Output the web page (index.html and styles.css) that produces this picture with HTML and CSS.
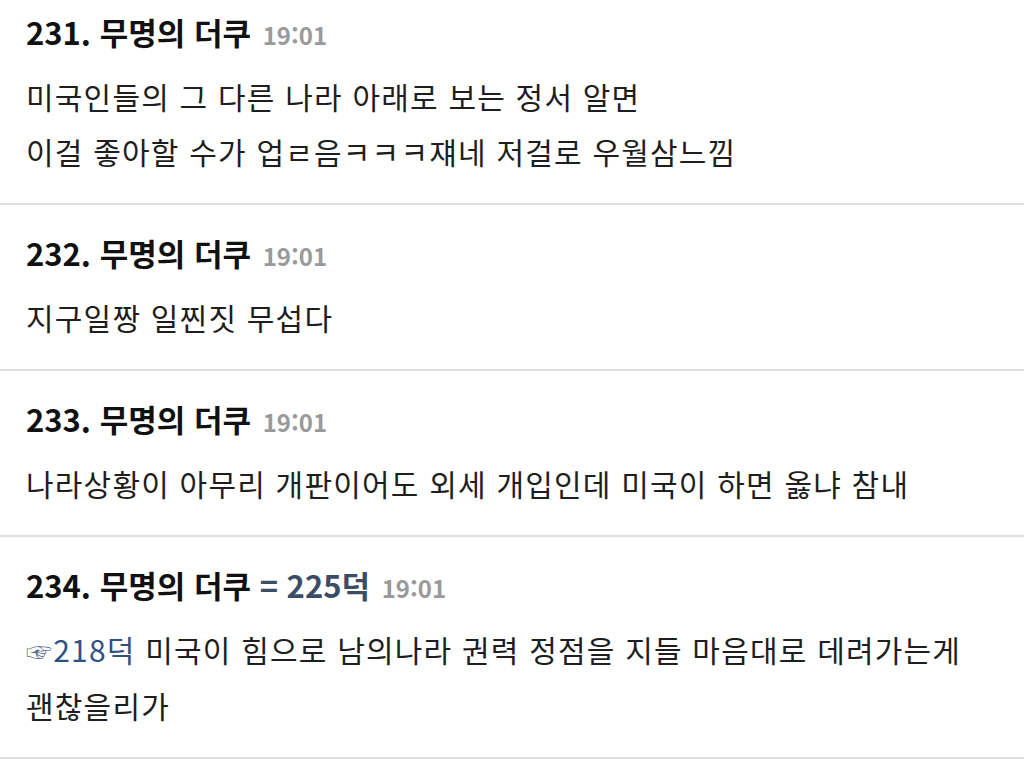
FILE: index.html
```html
<!DOCTYPE html>
<html lang="ko">
<head>
<meta charset="utf-8">
<link rel="stylesheet" href="styles.css">
</head>
<body>
<div class="list">
  <div class="post post-first">
    <div class="head"><span class="num">231.</span> <span class="name">무명의 더쿠</span> <span class="time">19:01</span></div>
    <div class="body">미국인들의 그 다른 나라 아래로 보는 정서 알면<br>이걸 좋아할 수가 업ㄹ음ㅋㅋㅋ쟤네 저걸로 우월삼느낌</div>
  </div>
  <div class="post">
    <div class="head"><span class="num">232.</span> <span class="name">무명의 더쿠</span> <span class="time">19:01</span></div>
    <div class="body">지구일짱 일찐짓 무섭다</div>
  </div>
  <div class="post">
    <div class="head"><span class="num">233.</span> <span class="name">무명의 더쿠</span> <span class="time">19:01</span></div>
    <div class="body">나라상황이 아무리 개판이어도 외세 개입인데 미국이 하면 옳냐 참내</div>
  </div>
  <div class="post">
    <div class="head"><span class="num">234.</span> <span class="name">무명의 더쿠</span> <span class="same">= 225덕</span> <span class="time">19:01</span></div>
    <div class="body"><span class="ref"><span class="hand">☞</span>218덕</span> 미국이 힘으로 남의나라 권력 정점을 지들 마음대로 데려가는게<br>괜찮을리가</div>
  </div>
</div>
</body>
</html>
```
FILE: styles.css
```css
html, body {
  margin: 0;
  padding: 0;
  background: #fff;
}
body {
  font-family: "Noto Sans CJK KR", "Noto Sans", sans-serif;
  color: #222;
  overflow: hidden;
}
.list {
  display: flex;
  flex-direction: column;
}
.post {
  padding: 28px 26px 24px;
  border-bottom: 2px solid #e0e0e0;
}
.post-first {
  padding-top: 12px;
}
.head {
  height: 40px;
  line-height: 40px;
  font-size: 31px;
  font-weight: 700;
  color: #111;
  white-space: nowrap;
}
.time {
  font-size: 24px;
  color: #9a9a9a;
  font-weight: 700;
  margin-left: 3px;
}
.same {
  color: #3b4c66;
  font-weight: 700;
}
.body {
  margin-top: 17px;
  font-size: 30px;
  line-height: 55px;
  letter-spacing: 1.2px;
  color: #1e1e1e;
  white-space: nowrap;
}
.ref {
  color: #2f5283;
}
.hand {
  color: #5d6f8c;
  font-size: 26px;
}
```
